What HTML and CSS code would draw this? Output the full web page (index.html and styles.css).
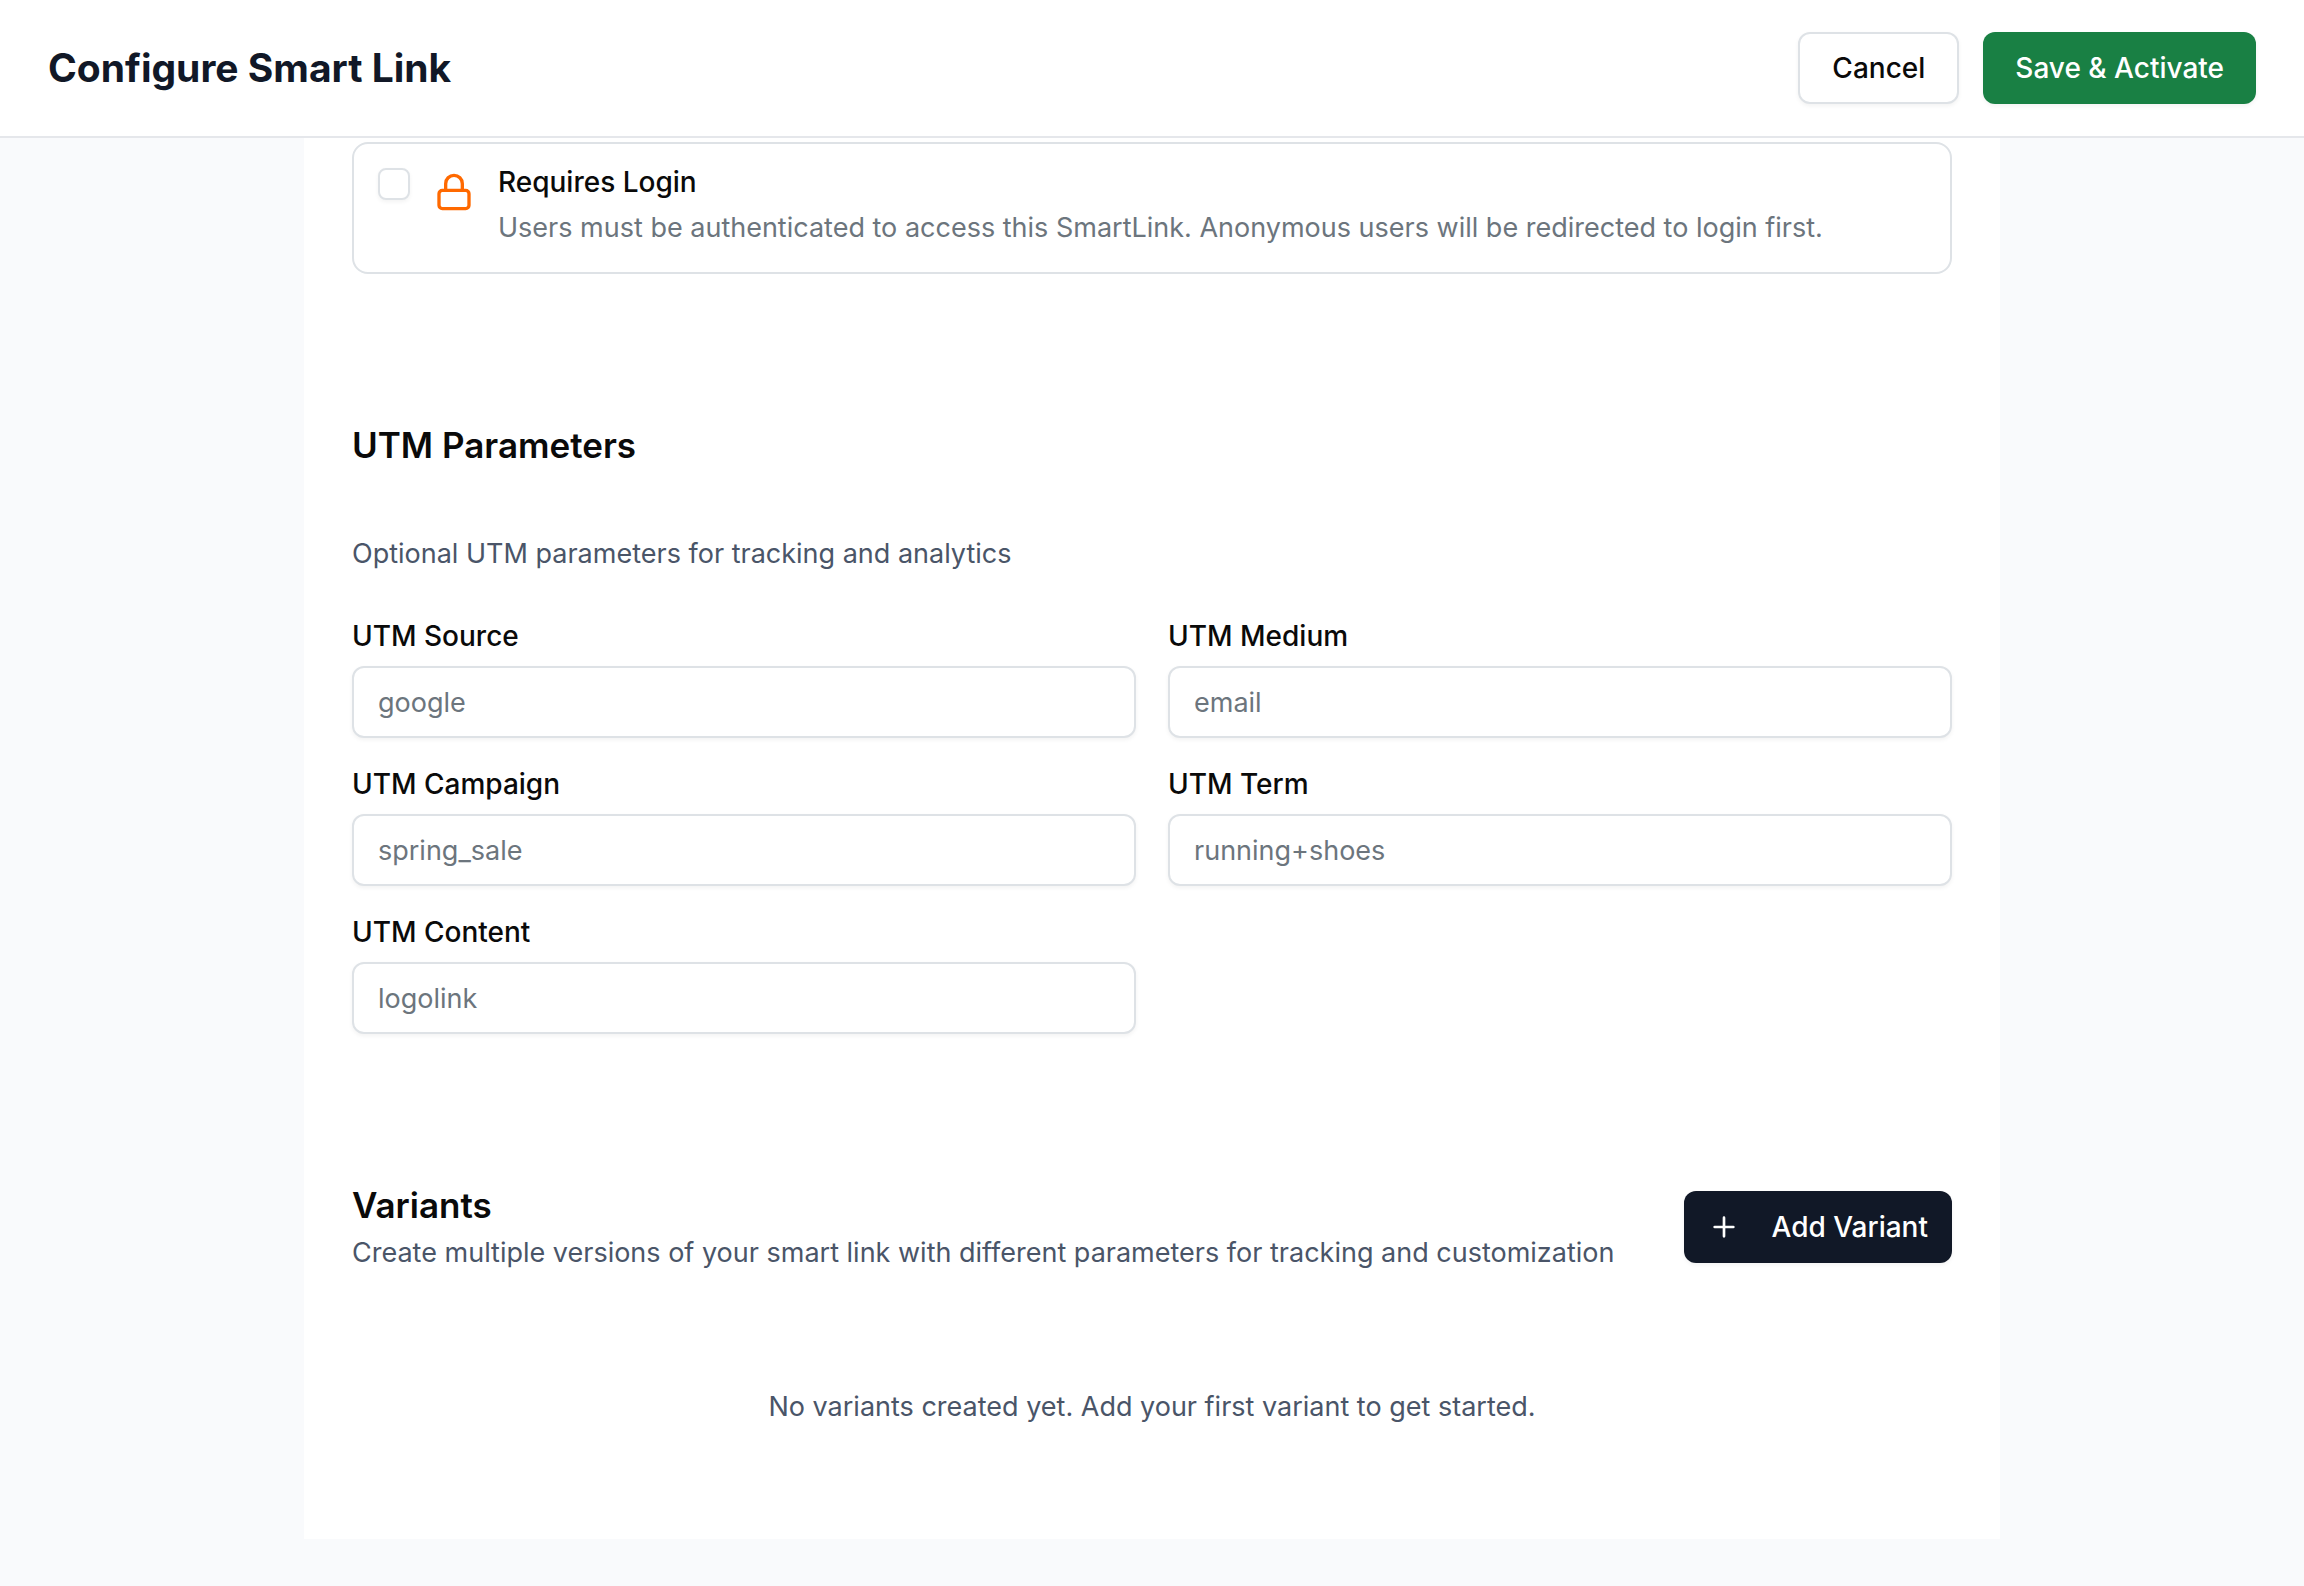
FILE: index.html
```html
<!DOCTYPE html>
<html lang="en">
<head>
  <meta charset="UTF-8" />
  <meta name="viewport" content="width=device-width, initial-scale=1" />
  <title>Configure Smart Link</title>
  <link rel="stylesheet" href="styles.css">
</head>
<body>
  <header class="topbar">
    <h1>Configure Smart Link</h1>
    <div class="topbar-actions">
      <button type="button" class="btn btn-outline">Cancel</button>
      <button type="submit" form="smartlink-form" class="btn btn-save">Save &amp; Activate</button>
    </div>
  </header>

  <main>
    <form class="panel" id="smartlink-form">
      <div class="option-card">
        <input type="checkbox" id="requiresLogin" class="checkbox" />
        <svg class="lock-icon" viewBox="0 0 24 24" aria-hidden="true">
          <rect x="3" y="11" width="18" height="11" rx="2" ry="2" />
          <path d="M7 11V7a5 5 0 0 1 10 0v4" />
        </svg>
        <div>
          <label for="requiresLogin">Requires Login</label>
          <p class="option-text">Users must be authenticated to access this SmartLink. Anonymous users will be redirected to login first.</p>
        </div>
      </div>

      <section>
        <h2>UTM Parameters</h2>
        <p class="intro">Optional UTM parameters for tracking and analytics</p>
        <div class="fields">
          <div class="field">
            <label for="utmSource">UTM Source</label>
            <input type="text" id="utmSource" placeholder="google" />
          </div>
          <div class="field">
            <label for="utmMedium">UTM Medium</label>
            <input type="text" id="utmMedium" placeholder="email" />
          </div>
          <div class="field">
            <label for="utmCampaign">UTM Campaign</label>
            <input type="text" id="utmCampaign" placeholder="spring_sale" />
          </div>
          <div class="field">
            <label for="utmTerm">UTM Term</label>
            <input type="text" id="utmTerm" placeholder="running+shoes" />
          </div>
          <div class="field">
            <label for="utmContent">UTM Content</label>
            <input type="text" id="utmContent" placeholder="logolink" />
          </div>
        </div>
      </section>

      <section>
        <div class="variants-head">
          <div>
            <h2>Variants</h2>
            <p class="variants-text">Create multiple versions of your smart link with different parameters for tracking and customization</p>
          </div>
          <button type="button" class="btn btn-dark">
            <svg class="plus-icon" viewBox="0 0 24 24" aria-hidden="true">
              <path d="M5 12h14M12 5v14" />
            </svg>
            Add Variant
          </button>
        </div>
        <p class="empty">No variants created yet. Add your first variant to get started.</p>
      </section>
    </form>
  </main>
</body>
</html>
```
FILE: styles.css
```css
* {
  box-sizing: border-box;
}
body {
  margin: 0;
  min-height: 100vh;
  background-color: #f9fafc;
  color: #0a0a0a;
  font-family: Inter, "Liberation Sans", sans-serif;
  font-size: 27px;
  line-height: 40px;
}
h1, h2, p {
  margin: 0;
}
p {
  color: #4a5568;
}

/* Header */
.topbar {
  display: flex;
  justify-content: space-between;
  align-items: center;
  padding: 32px 48px;
  background-color: #fff;
  border-bottom: 2px solid #e5e7eb;
}
.topbar h1 {
  color: #111827;
  font-size: 39px;
  font-weight: 700;
}
.topbar-actions {
  display: flex;
  gap: 24px;
}

/* Buttons */
.btn {
  display: inline-flex;
  align-items: center;
  justify-content: center;
  height: 72px;
  padding: 0 32px;
  border: none;
  border-radius: 12px;
  box-shadow: 0 2px 4px rgba(0, 0, 0, 0.05);
  color: #fff;
  font: inherit;
  font-size: 28px;
  font-weight: 500;
  white-space: nowrap;
  cursor: pointer;
}
.btn-outline {
  background-color: #fff;
  border: 2px solid #dee2e6;
  color: #0a0a0a;
}
.btn-save {
  background-color: #198044;
}
.btn-dark {
  gap: 32px;
  padding: 0 24px;
  background-color: #111827;
}

/* Main panel */
.panel {
  max-width: 1696px;
  margin: 0 auto;
  padding: 4px 48px 48px;
  background-color: #fff;
}
label {
  display: block;
  font-size: 28px;
  font-weight: 500;
  line-height: 28px;
}
h2 {
  font-size: 35px;
  font-weight: 600;
  line-height: 52px;
}
section {
  padding-top: 145px;
}

.option-card {
  display: flex;
  align-items: flex-start;
  gap: 24px;
  padding: 24px;
  border: 2px solid #dee2e6;
  border-radius: 16px;
}
.option-text {
  margin-top: 12px;
  color: #6c757d;
}
.checkbox {
  appearance: none;
  flex: none;
  width: 32px;
  height: 32px;
  margin: 0;
  border: 2px solid #dee2e6;
  border-radius: 8px;
  background-color: #fff;
  box-shadow: 0 2px 4px rgba(0, 0, 0, 0.05);
}
.checkbox:checked {
  background-color: #111827;
}
svg {
  flex: none;
  fill: none;
  stroke: currentColor;
  stroke-width: 2;
  stroke-linecap: round;
  stroke-linejoin: round;
}
.lock-icon {
  width: 40px;
  height: 40px;
  margin-top: 4px;
  color: #ff6900;
}
.plus-icon {
  width: 32px;
  height: 32px;
}

/* UTM fields */
.intro {
  margin: 63px 0 48px;
}
.fields {
  display: grid;
  grid-template-columns: 1fr 1fr;
  gap: 32px;
}
.field input {
  display: block;
  width: 100%;
  height: 72px;
  margin-top: 16px;
  padding: 0 24px;
  border: 2px solid #dee2e6;
  border-radius: 12px;
  background-color: #fff;
  box-shadow: 0 2px 4px rgba(0, 0, 0, 0.05);
  color: #0a0a0a;
  font: inherit;
}
.field input::placeholder {
  color: #6c757d;
  opacity: 1;
}

/* Variants */
.variants-head {
  display: flex;
  justify-content: space-between;
  align-items: center;
}
.variants-text {
  line-height: 44px;
}
.empty {
  margin-top: 48px;
  padding: 64px 0;
  text-align: center;
}
```
